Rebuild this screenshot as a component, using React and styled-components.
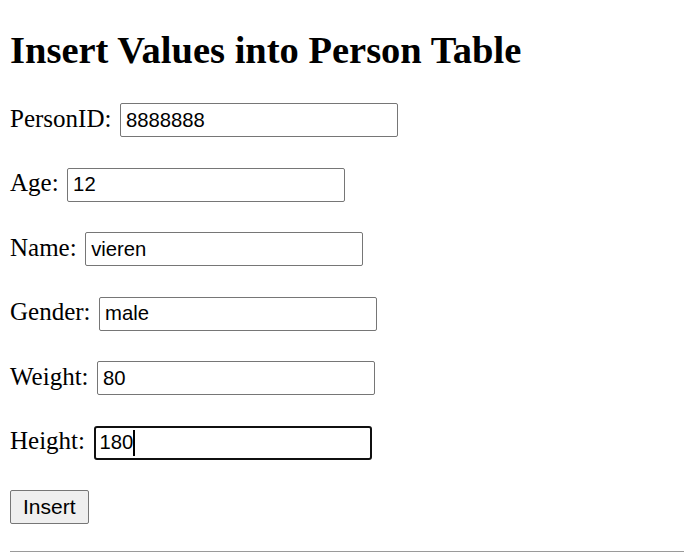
import styled, { createGlobalStyle } from "styled-components";

const Global = createGlobalStyle`
	body {
		margin: 0;
		background: #fff;
		color: #000;
		font-family: "Liberation Serif", "Times New Roman", serif;
	}
`;

const Page = styled.div`
	padding: 0 10px;
`;

const Title = styled.h1`
	margin: 28px 0 31px;
	font-size: 38.5px;
	line-height: 44px;
	font-weight: bold;
`;

const Form = styled.form`
	display: flex;
	flex-direction: column;
	align-items: flex-start;
	gap: 30.55px;
`;

const Row = styled.div`
	display: flex;
	align-items: baseline;
	gap: 8.5px;
	height: 34px;
	font-size: 25px;
`;

const Field = styled.span`
	position: relative;
	display: inline-flex;
`;

const Input = styled.input`
	box-sizing: border-box;
	width: 278px;
	height: 34px;
	margin: 0;
	padding: ${(p) => (p.$focused ? "0 4px" : "0 5px")};
	border: ${(p) => (p.$focused ? "2px solid #101010" : "1px solid #767676")};
	border-radius: ${(p) => (p.$focused ? "3px" : "2px")};
	outline: none;
	background: #fff;
	color: #000;
	font-family: "Liberation Sans", Arial, sans-serif;
	font-size: 20.3px;
	caret-color: transparent;
`;

const Caret = styled.span`
	position: absolute;
	top: 4px;
	bottom: 4px;
	width: 2px;
	background: #000;
`;

const Button = styled.button`
	box-sizing: border-box;
	height: 34px;
	padding: 0 12px;
	border: 1px solid #767676;
	border-radius: 2px;
	background: #efefef;
	color: #000;
	font-family: "Liberation Sans", Arial, sans-serif;
	font-size: 21px;
`;

const Rule = styled.hr`
	margin: 27px 0 0;
	border: none;
	border-top: 1px solid #9a9a9a;
	height: 1px;
`;

const fields = [
	{ label: "PersonID:", value: "8888888" },
	{ label: "Age:", value: "12" },
	{ label: "Name:", value: "vieren" },
	{ label: "Gender:", value: "male" },
	{ label: "Weight:", value: "80" },
	{ label: "Height:", value: "180", focused: true },
];

export default function App() {
	return (
		<Page>
			<Global />
			<Title>Insert Values into Person Table</Title>
			<Form onSubmit={(e) => e.preventDefault()}>
				{fields.map((f) => (
					<Row key={f.label}>
						<label>{f.label}</label>
						<Field>
							<Input type="text" defaultValue={f.value} $focused={f.focused} />
							{f.focused && <Caret style={{ left: 6 + f.value.length * 11.3 }} />}
						</Field>
					</Row>
				))}
				<Button type="submit">Insert</Button>
			</Form>
			<Rule />
		</Page>
	);
}
